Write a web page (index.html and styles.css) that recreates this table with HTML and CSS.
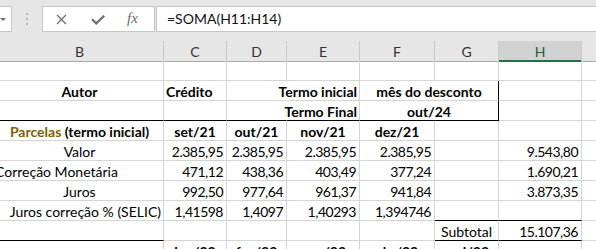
FILE: index.html
```html
<!DOCTYPE html>
<html lang="pt">
<head>
<meta charset="utf-8">
<title>Planilha</title>
<link rel="stylesheet" href="styles.css">
</head>
<body>
<div class="fbar">
  <div class="namebox"><span class="caret"></span></div>
  <div class="grip"><i></i><i></i><i></i></div>
  <div class="fxbox">
    <svg class="ic-x" width="11" height="11" viewBox="0 0 11 11"><path d="M1 1L10 10M10 1L1 10" stroke="#707070" stroke-width="1.4" fill="none"/></svg>
    <svg class="ic-ok" width="14" height="10" viewBox="0 0 14 10"><path d="M1 4.2L5.2 8.4L13.2 0.8" stroke="#6e6e6e" stroke-width="2.2" fill="none"/></svg>
    <span class="fx">fx</span>
  </div>
  <div class="formula">=SOMA(H11:H14)</div>
</div>
<div class="sheet">
  <div class="ch">B</div><div class="ch">C</div><div class="ch">D</div><div class="ch">E</div><div class="ch">F</div><div class="ch">G</div><div class="ch sel">H</div><div class="ch"></div>

  <div class="c"></div><div class="c"></div><div class="c"></div><div class="c"></div><div class="c"></div><div class="c"></div><div class="c"></div><div class="c"></div>

  <div class="c ctr b">Autor</div><div class="c lft b">Crédito</div><div class="c nor"></div><div class="c rgt b"><span>Termo inicial</span></div><div class="c ctr b span2 brk">mês do desconto</div><div class="c"></div><div class="c"></div>

  <div class="c bbk"></div><div class="c bbk"></div><div class="c nor bbk"></div><div class="c rgt b bbk"><span>Termo Final</span></div><div class="c ctr b span2 brk bbk">out/24</div><div class="c"></div><div class="c"></div>

  <div class="c ctr b"><span><span class="gold">Parcelas</span> (termo inicial)</span></div><div class="c ctr b">set/21</div><div class="c ctr b">out/21</div><div class="c ctr b">nov/21</div><div class="c ctr b">dez/21</div><div class="c"></div><div class="c"></div><div class="c"></div>

  <div class="c ctr">Valor</div><div class="c n">2.385,95</div><div class="c n">2.385,95</div><div class="c n">2.385,95</div><div class="c n">2.385,95</div><div class="c"></div><div class="c n">9.543,80</div><div class="c"></div>

  <div class="c lft ovl"><span>Correção Monetária</span></div><div class="c n">471,12</div><div class="c n">438,36</div><div class="c n">403,49</div><div class="c n">377,24</div><div class="c"></div><div class="c n">1.690,21</div><div class="c"></div>

  <div class="c ctr">Juros</div><div class="c n">992,50</div><div class="c n">977,64</div><div class="c n">961,37</div><div class="c n">941,84</div><div class="c"></div><div class="c n">3.873,35</div><div class="c"></div>

  <div class="c rgt lab"><span>Juros correção % (SELIC)</span></div><div class="c n">1,41598</div><div class="c n">1,4097</div><div class="c n">1,40293</div><div class="c n">1,394746</div><div class="c bbk"></div><div class="c bbk"></div><div class="c"></div>

  <div class="c bbk"></div><div class="c"></div><div class="c"></div><div class="c"></div><div class="c"></div><div class="c ctr bbk">Subtotal</div><div class="c n bbk">15.107,36</div><div class="c"></div>

  <div class="c"></div><div class="c ctr b">jan/22</div><div class="c ctr b">fev/22</div><div class="c ctr b">mar/22</div><div class="c ctr b">abr/22</div><div class="c ctr b">mai/22</div><div class="c"></div><div class="c"></div>
</div>
</body>
</html>
```

FILE: styles.css
```css
* { box-sizing: border-box; }
html, body { margin: 0; padding: 0; background: #fff; overflow: hidden; }
body { font-family: "Lato", "Open Sans", sans-serif; color: #000; width: 596px; height: 249px; }

.fbar {
  height: 41px;
  background: #e6e6e6;
  display: flex;
  align-items: flex-start;
  padding-top: 6px;
}
.namebox {
  width: 32px;
  height: 26px;
  margin-left: -20px;
  background: #fff;
  border: 1px solid #c6c6c6;
  display: flex;
  align-items: center;
  justify-content: flex-end;
  padding-right: 5px;
}
.caret {
  width: 0; height: 0;
  border-left: 3px solid transparent;
  border-right: 3px solid transparent;
  border-top: 3px solid #6f6f6f;
}
.grip {
  margin-left: 14px;
  height: 26px;
  display: flex;
  flex-direction: column;
  justify-content: center;
  gap: 3px;
}
.grip i { display: block; width: 2px; height: 2px; background: #b4b4b4; }
.fxbox {
  margin-left: 14px;
  width: 113px;
  height: 26px;
  background: #fff;
  border: 1px solid #c6c6c6;
  display: flex;
  align-items: center;
}
.ic-x { margin-left: 13px; }
.ic-ok { margin-left: 24px; margin-top: 1px; }
.fx {
  margin-left: 22px;
  font-family: "Liberation Serif", "DejaVu Serif", serif;
  font-style: italic;
  font-size: 15px;
  color: #6b6b6b;
  line-height: 1;
  margin-top: -2px;
}
.formula {
  margin-left: 1px;
  flex: 1;
  height: 26px;
  background: #fff;
  border: 1px solid #c6c6c6;
  border-right: none;
  padding-left: 10px;
  font-size: 14px;
  line-height: 24px;
  color: #111;
}

.sheet {
  display: grid;
  grid-template-columns: 168px 63px 60px 73px 75px 64px 83px 60px;
  grid-auto-rows: 20px;
  margin-left: -4px;
  font-size: 14px;
}
.ch {
  height: 21px;
  background: #e6e6e6;
  border-right: 1px solid #c8c8c8;
  border-bottom: 1px solid #ababab;
  display: flex;
  align-items: center;
  justify-content: center;
  font-size: 14px;
  color: #333;
}
.ch.sel {
  background: #d2d2d2;
  border-bottom: 2px solid #217346;
  color: #2b5a3c;
  padding-top: 1px;
}
.c {
  height: 20px;
  border-right: 1px solid #d4d4d4;
  border-bottom: 1px solid #d4d4d4;
  display: flex;
  align-items: flex-end;
  white-space: nowrap;
  line-height: normal;
}
.c > span { white-space: nowrap; }
.ctr { justify-content: center; }
.lft { justify-content: flex-start; padding-left: 2px; }
.rgt { justify-content: flex-end; padding-right: 2px; }
.ovl { padding-left: 0; margin-left: -1px; }
.n { justify-content: flex-end; padding-right: 3px; letter-spacing: -0.5px; }
.b { font-weight: 700; }
.gold { color: #7f6000; }
.span2 { grid-column: span 2; }
.nor { border-right-color: transparent; }
.brk { border-right-color: #000; }
.bbk { border-bottom-color: #000; }
```
